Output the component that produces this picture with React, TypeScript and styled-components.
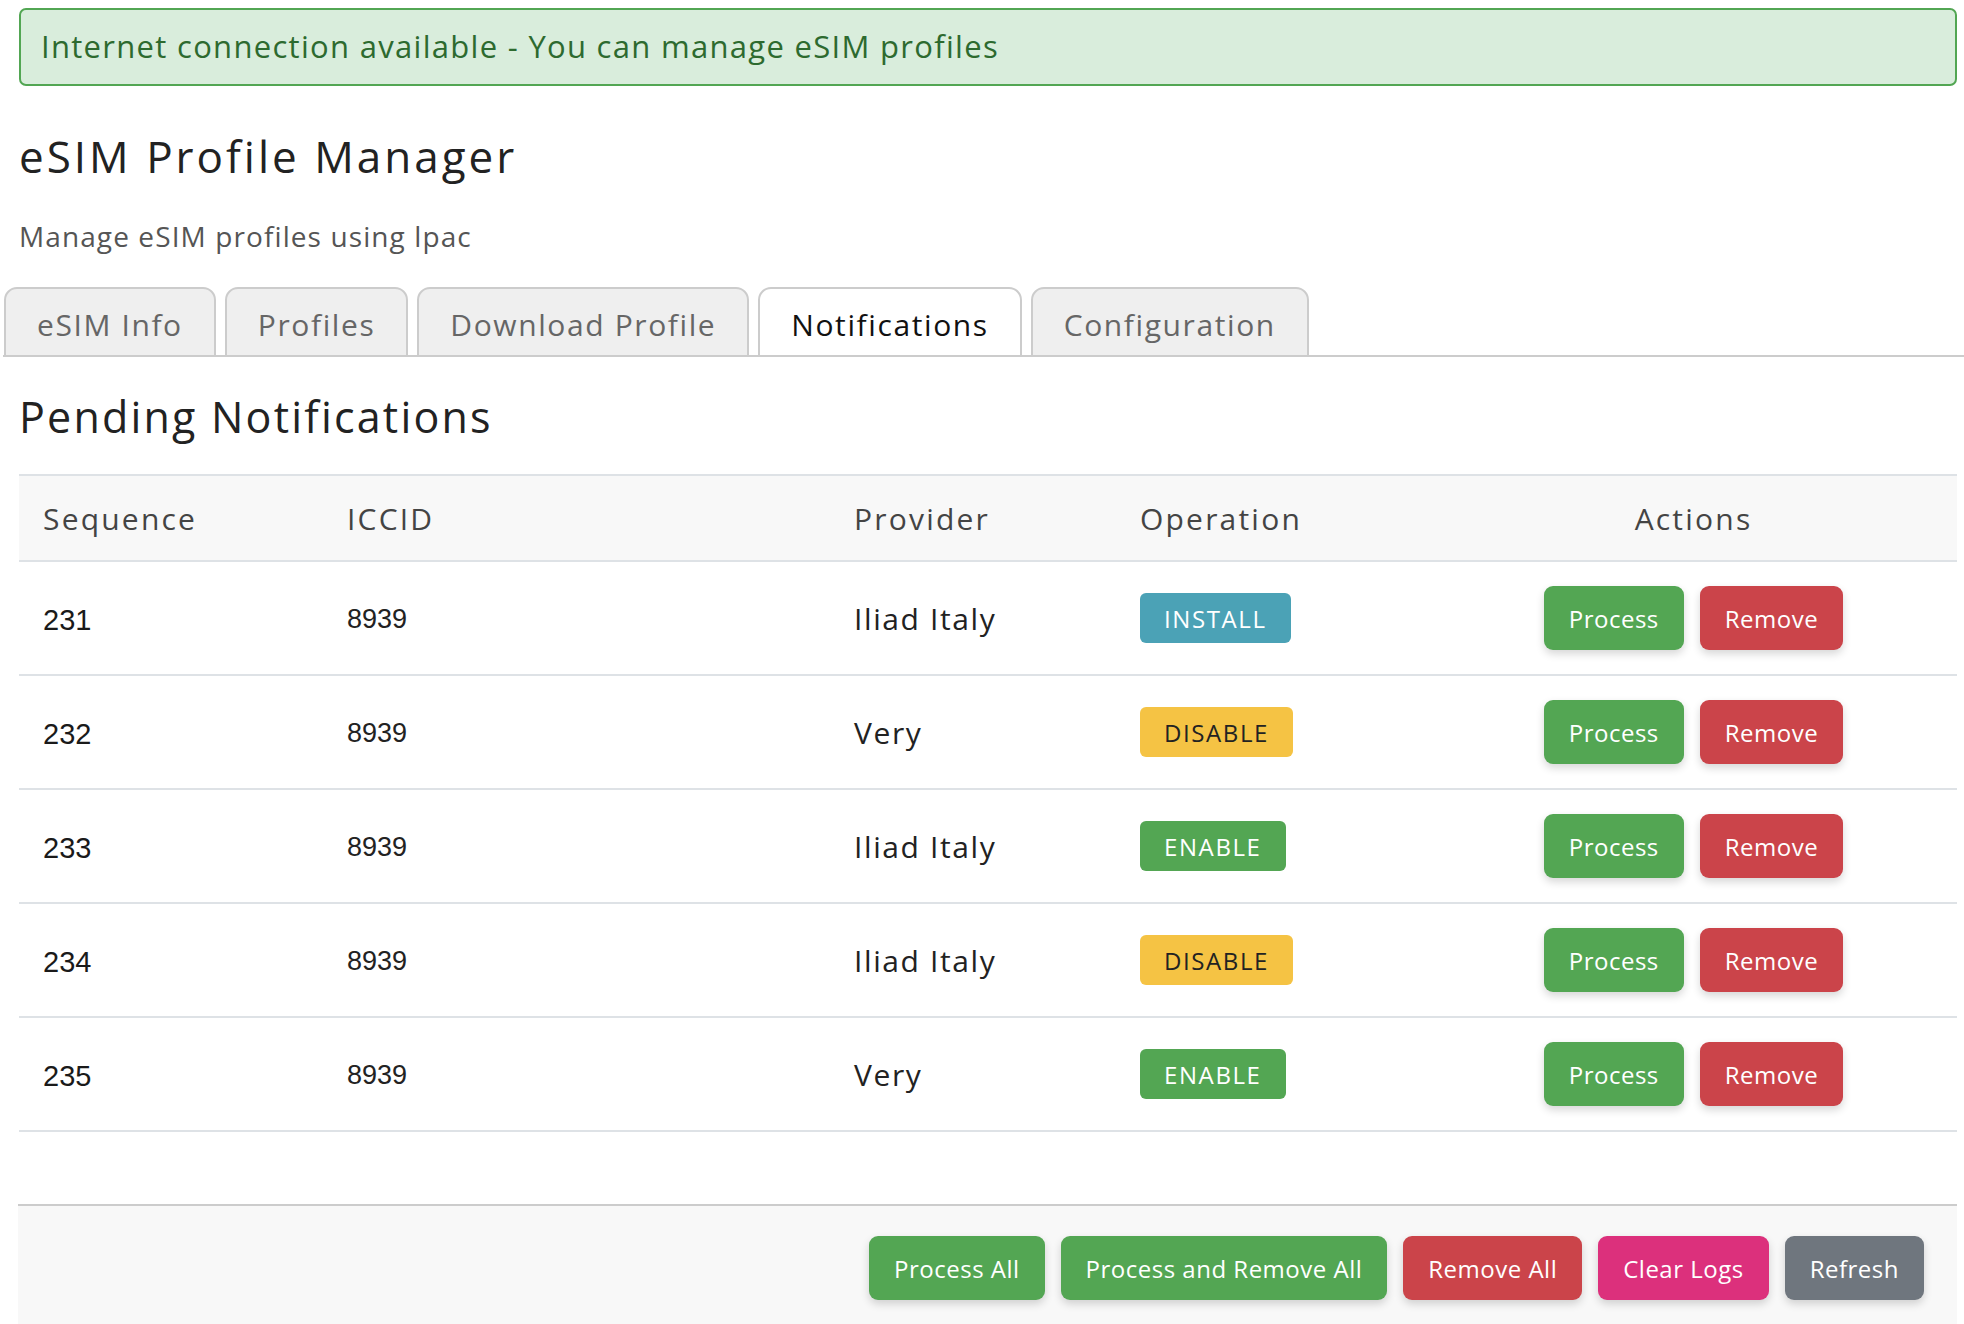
import React from "react";
import styled, { createGlobalStyle } from "styled-components";

const GlobalStyle = createGlobalStyle`
  html, body {
    margin: 0;
    padding: 0;
    background: #ffffff;
    overflow-x: hidden;
  }
  body {
    font-family: "Open Sans", "Noto Sans", Arial, sans-serif;
    color: #222;
  }
  * { box-sizing: border-box; }
`;

const Page = styled.div`
  padding: 8px 7px 0 19px;
`;

const Alert = styled.div`
  height: 78px;
  display: flex;
  align-items: center;
  padding: 0 0 2px 20px;
  background: #d9eddc;
  border: 2px solid #52a653;
  border-radius: 7px;
  color: #2d6a2f;
  font-size: 31px;
  letter-spacing: 1.3px;
`;

const Title = styled.h1`
  margin: 45px 0 0 0;
  font-size: 44px;
  line-height: 50px;
  font-weight: 400;
  letter-spacing: 3px;
  color: #222;
`;

const Subtitle = styled.p`
  margin: 37px 0 0 0;
  font-size: 28px;
  line-height: 36px;
  letter-spacing: 1.1px;
  color: #555;
`;

const TabBar = styled.div`
  display: flex;
  gap: 9px;
  margin: 33px -7px 0 -16px;
  padding-left: 1px;
  border-bottom: 2px solid #cccccc;
`;

const Tab = styled.button<{ $active?: boolean }>`
  height: 70px;
  padding: 4px 31px 0;
  margin-bottom: -2px;
  border: 2px solid #cccccc;
  border-radius: 13px 13px 0 0;
  background: ${(p) => (p.$active ? "#ffffff" : "#efefef")};
  color: ${(p) => (p.$active ? "#111111" : "#666666")};
  font-family: inherit;
  font-size: 30px;
  letter-spacing: 1.6px;
  cursor: pointer;
`;

const SectionTitle = styled.h2`
  margin: 35px 0 0 0;
  font-size: 43px;
  line-height: 50px;
  font-weight: 400;
  letter-spacing: 2.2px;
  color: #222;
`;

const Table = styled.div`
  margin-top: 32px;
  border-top: 2px solid #dee2e6;
`;

const columns = "304px 507px 286px 314px 1fr";

const HeadRow = styled.div`
  display: grid;
  grid-template-columns: ${columns};
  height: 86px;
  align-items: center;
  background: #f8f8f8;
  border-bottom: 2px solid #dee2e6;
`;

const HeadCell = styled.div<{ $center?: boolean }>`
  padding-left: ${(p) => (p.$center ? "0" : "24px")};
  text-align: ${(p) => (p.$center ? "center" : "left")};
  font-size: 30px;
  letter-spacing: 2.2px;
  color: #444;
`;

const Row = styled.div`
  display: grid;
  grid-template-columns: ${columns};
  height: 114px;
  align-items: center;
  border-bottom: 2px solid #dee2e6;
`;

const Cell = styled.div<{ $center?: boolean }>`
  padding-left: ${(p) => (p.$center ? "0" : "24px")};
  display: flex;
  align-items: center;
  justify-content: ${(p) => (p.$center ? "center" : "flex-start")};
  gap: 16px;
  font-size: 30px;
  letter-spacing: 1.6px;
  color: #222;
`;

const Seq = styled.span`
  padding-top: 4px;
  font-family: "Liberation Sans", Arial, sans-serif;
  font-size: 29px;
  letter-spacing: 0;
  color: #1a1a1a;
`;

const Iccid = styled.span`
  padding-top: 3px;
  font-family: "Liberation Sans", Arial, sans-serif;
  font-size: 27px;
  letter-spacing: 0;
  color: #222;
`;

const badgeColors: Record<string, { bg: string; fg: string }> = {
  INSTALL: { bg: "#4ba2b6", fg: "#ffffff" },
  DISABLE: { bg: "#f5c344", fg: "#222222" },
  ENABLE: { bg: "#53a653", fg: "#ffffff" },
};

const Badge = styled.span<{ $bg: string; $fg: string }>`
  display: inline-flex;
  align-items: center;
  height: 50px;
  padding: 0 24px;
  border-radius: 6px;
  background: ${(p) => p.$bg};
  color: ${(p) => p.$fg};
  font-size: 24px;
  letter-spacing: 1.6px;
`;

const btnColors = {
  green: "#53a653",
  red: "#cb444a",
  pink: "#dc307c",
  grey: "#6f767e",
};

const Button = styled.button<{ $color: keyof typeof btnColors }>`
  height: 64px;
  padding: 0 25px;
  border: none;
  border-radius: 9px;
  background: ${(p) => btnColors[p.$color]};
  color: #ffffff;
  font-family: inherit;
  font-size: 24px;
  letter-spacing: 0.5px;
  box-shadow: 0 4px 9px rgba(0, 0, 0, 0.16);
  cursor: pointer;
`;

const Footer = styled.div`
  margin-top: 72px;
  margin-left: -1px;
  display: flex;
  justify-content: flex-end;
  gap: 16px;
  padding: 30px 33px 40px;
  background: #f8f8f8;
  border-top: 2px solid #cccccc;
`;

const rows = [
  { seq: "231", iccid: "8939", provider: "Iliad Italy", op: "INSTALL" },
  { seq: "232", iccid: "8939", provider: "Very", op: "DISABLE" },
  { seq: "233", iccid: "8939", provider: "Iliad Italy", op: "ENABLE" },
  { seq: "234", iccid: "8939", provider: "Iliad Italy", op: "DISABLE" },
  { seq: "235", iccid: "8939", provider: "Very", op: "ENABLE" },
];

const tabs = ["eSIM Info", "Profiles", "Download Profile", "Notifications", "Configuration"];

export default function App() {
  return (
    <>
      <GlobalStyle />
      <Page>
        <Alert>Internet connection available - You can manage eSIM profiles</Alert>
        <Title>eSIM Profile Manager</Title>
        <Subtitle>Manage eSIM profiles using lpac</Subtitle>
        <TabBar>
          {tabs.map((t) => (
            <Tab key={t} $active={t === "Notifications"}>
              {t}
            </Tab>
          ))}
        </TabBar>
        <SectionTitle>Pending Notifications</SectionTitle>
        <Table>
          <HeadRow>
            <HeadCell>Sequence</HeadCell>
            <HeadCell>ICCID</HeadCell>
            <HeadCell>Provider</HeadCell>
            <HeadCell>Operation</HeadCell>
            <HeadCell $center>Actions</HeadCell>
          </HeadRow>
          {rows.map((r) => {
            const c = badgeColors[r.op];
            return (
              <Row key={r.seq}>
                <Cell>
                  <Seq>{r.seq}</Seq>
                </Cell>
                <Cell>
                  <Iccid>{r.iccid}</Iccid>
                </Cell>
                <Cell>{r.provider}</Cell>
                <Cell>
                  <Badge $bg={c.bg} $fg={c.fg}>
                    {r.op}
                  </Badge>
                </Cell>
                <Cell $center>
                  <Button $color="green">Process</Button>
                  <Button $color="red">Remove</Button>
                </Cell>
              </Row>
            );
          })}
        </Table>
        <Footer>
          <Button $color="green">Process All</Button>
          <Button $color="green">Process and Remove All</Button>
          <Button $color="red">Remove All</Button>
          <Button $color="pink">Clear Logs</Button>
          <Button $color="grey">Refresh</Button>
        </Footer>
      </Page>
    </>
  );
}
